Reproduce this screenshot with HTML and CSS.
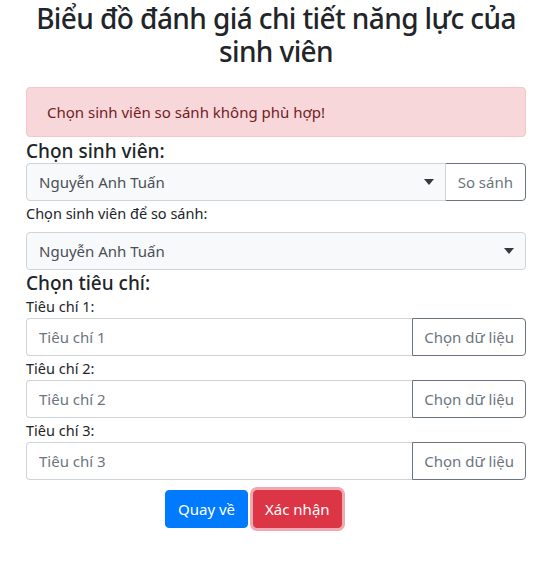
FILE: index.html
```html
<!DOCTYPE html>
<html lang="vi">
<head>
<meta charset="utf-8">
<title>Biểu đồ đánh giá</title>
<link rel="stylesheet" href="styles.css">
</head>
<body>
<div class="container">
  <h3 class="title">Biểu đồ đánh giá chi tiết năng lực của sinh viên</h3>
  <div class="alert">Chọn sinh viên so sánh không phù hợp!</div>

  <div class="section-label">Chọn sinh viên:</div>
  <div class="input-group">
    <div class="select-wrap">
      <select class="custom-select grouped"><option>Nguyễn Anh Tuấn</option></select>
      <svg class="caret" width="10" height="6" viewBox="0 0 10 6"><path d="M0 0h10L5 6z" fill="#343a40"/></svg>
    </div>
    <button class="btn-outline wide">So sánh</button>
  </div>

  <div class="field-label spaced">Chọn sinh viên để so sánh:</div>
  <div class="select-wrap">
    <select class="custom-select"><option>Nguyễn Anh Tuấn</option></select>
    <svg class="caret" width="10" height="6" viewBox="0 0 10 6"><path d="M0 0h10L5 6z" fill="#343a40"/></svg>
  </div>

  <div class="section-label second">Chọn tiêu chí:</div>

  <div class="field-label">Tiêu chí 1:</div>
  <div class="input-group">
    <input class="form-control" placeholder="Tiêu chí 1">
    <button class="btn-outline">Chọn dữ liệu</button>
  </div>
  <div class="field-label">Tiêu chí 2:</div>
  <div class="input-group">
    <input class="form-control" placeholder="Tiêu chí 2">
    <button class="btn-outline">Chọn dữ liệu</button>
  </div>
  <div class="field-label">Tiêu chí 3:</div>
  <div class="input-group">
    <input class="form-control" placeholder="Tiêu chí 3">
    <button class="btn-outline">Chọn dữ liệu</button>
  </div>

  <div class="actions">
    <button class="btn btn-primary">Quay về</button>
    <button class="btn btn-danger focus">Xác nhận</button>
  </div>
</div>
</body>
</html>
```

FILE: styles.css
```css
* { box-sizing: border-box; }
body {
  margin: 0;
  font-family: "Noto Sans", "Open Sans", sans-serif;
  color: #212529;
  background: #fff;
}
.container {
  width: 500px;
  margin-left: 26px;
  padding-bottom: 30px;
}
.title {
  margin: 0 -10px;
  padding-top: 2px;
  font-size: 28px;
  font-weight: 500;
  line-height: 33px;
  text-align: center;
  letter-spacing: -0.6px;
}
.alert {
  margin-top: 19px;
  height: 50px;
  padding: 0 20px;
  display: flex;
  align-items: center;
  background: #f8d7da;
  border: 1px solid #f5c6cb;
  border-radius: 4px;
  color: #721c24;
  font-size: 15px;
}
.section-label {
  font-size: 19px;
  font-weight: 500;
  line-height: 24px;
  margin-top: 2px;
}
.section-label.second {
  margin-top: 2px;
  line-height: 22px;
}
.field-label {
  font-size: 14.5px;
  line-height: 24px;
  color: #212529;
}
.field-label.spaced {
  margin-bottom: 7px;
}
.input-group {
  display: flex;
  height: 38px;
}
.select-wrap {
  position: relative;
  flex: 1;
  height: 38px;
  display: flex;
}
.custom-select {
  appearance: none;
  -webkit-appearance: none;
  width: 100%;
  height: 38px;
  padding: 0 30px 0 12px;
  font-family: inherit;
  font-size: 15px;
  color: #495057;
  background: #f8f9fa;
  border: 1px solid #ced4da;
  border-radius: 4px;
  outline: none;
}
.custom-select.grouped {
  border-top-right-radius: 0;
  border-bottom-right-radius: 0;
}
.caret {
  position: absolute;
  right: 12px;
  top: 16px;
  pointer-events: none;
}
.form-control {
  flex: 1;
  min-width: 0;
  height: 38px;
  padding: 0 12px;
  font-family: inherit;
  font-size: 15px;
  color: #495057;
  background: #fff;
  border: 1px solid #ced4da;
  border-right: none;
  border-radius: 4px 0 0 4px;
  outline: none;
}
.form-control::placeholder { color: #6c757d; opacity: 1; }
.btn-outline {
  height: 38px;
  padding: 0 11px;
  font-family: inherit;
  font-size: 15px;
  color: #6c757d;
  background: #fff;
  border: 1px solid #6c757d;
  border-radius: 0 4px 4px 0;
  margin-left: -1px;
}
.btn-outline.wide { padding: 0 12px; }
.actions {
  display: flex;
  gap: 5px;
  margin-top: 10px;
  padding-left: 139px;
}
.btn {
  height: 38px;
  padding: 0 12px;
  font-family: inherit;
  font-size: 15px;
  color: #fff;
  border: 1px solid transparent;
  border-radius: 4px;
}
.btn-primary { background: #007bff; border-color: #007bff; }
.btn-danger { background: #dc3545; border-color: #dc3545; padding: 0 11px; }
.btn-danger.focus { box-shadow: 0 0 0 3px rgba(225, 83, 97, 0.5); }
```
